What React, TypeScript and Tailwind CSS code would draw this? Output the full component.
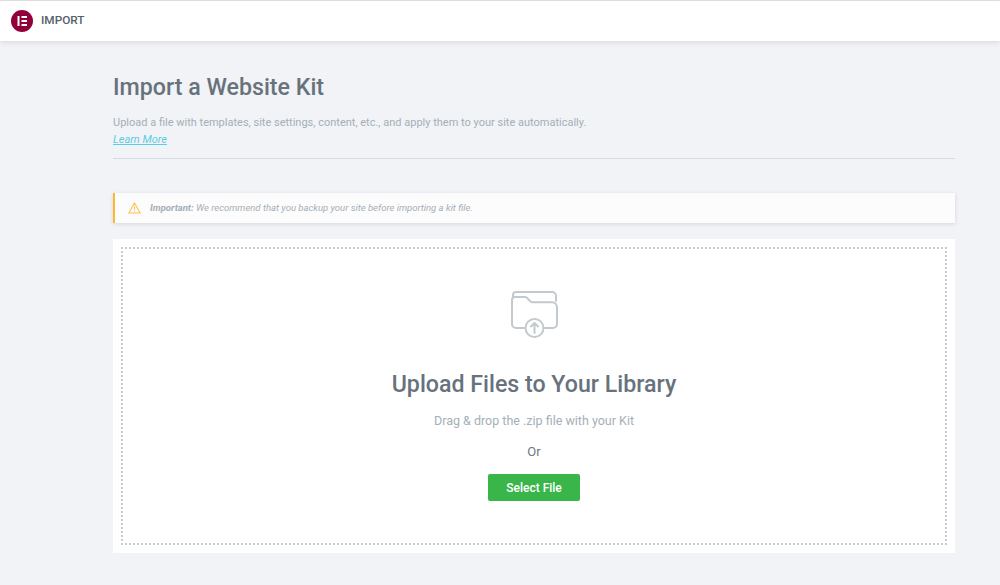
import React from 'react';

const Logo = () => (
  <svg width="22" height="22" viewBox="0 0 22 22" className="shrink-0">
    <circle cx="11" cy="11" r="11" fill="#92003b" />
    <rect x="6.5" y="6" width="2" height="10" fill="#fff" />
    <rect x="10.5" y="6" width="5.5" height="2" fill="#fff" />
    <rect x="10.5" y="10" width="5.5" height="2" fill="#fff" />
    <rect x="10.5" y="14" width="5.5" height="2" fill="#fff" />
  </svg>
);

const WarningIcon = () => (
  <svg width="13" height="12" viewBox="0 0 13 12" fill="none" stroke="#fbc04f" strokeWidth="1.1" className="shrink-0">
    <path d="M6.5 1 L12.2 11 H0.8 Z" strokeLinejoin="round" />
    <path d="M6.5 4.2 V7.8 M6.5 8.8 V9.8" />
  </svg>
);

const FolderIcon = () => (
  <svg width="48" height="48" viewBox="0 0 48 48" fill="none" stroke="#c2c9cf" strokeWidth="2" strokeLinecap="round" strokeLinejoin="round">
    <path d="M3 7.5 V5 a3 3 0 0 1 3-3 H42 a4 4 0 0 1 4 4 V11" />
    <path d="M14 38 H6 a4 4 0 0 1-4-4 V10 a3 3 0 0 1 3-3 H15 a3 3 0 0 1 2.5 1.5 L20 11 a3 3 0 0 0 2.5 1.2 H42 a5 5 0 0 1 5 5 V34 a4 4 0 0 1-4 4 H35" />
    <circle cx="24.5" cy="38" r="9" />
    <path d="M24.5 43 V33.5 M21 36.5 L24.5 33 L28 36.5" />
  </svg>
);

export default function App() {
  return (
    <div className="min-h-[585px] bg-[#f1f3f7] font-['Roboto',sans-serif] border-t border-[#e6e6e6]">
      {/* Header */}
      <header className="h-10 bg-white shadow-[0_1px_6px_rgba(0,0,0,0.12)] flex items-center pl-[11px] gap-2">
        <Logo />
        <span className="text-[11.8px] font-medium text-[#556068]">IMPORT</span>
      </header>

      <main className="w-[842px] ml-[113px]">
        {/* Intro */}
        <h1 className="mt-[31px] text-[23.2px] leading-[30px] font-medium text-[#67727c]">Import a Website Kit</h1>
        <p className="mt-[13px] text-[11px] leading-4 text-[#a4afb7]">
          Upload a file with templates, site settings, content, etc., and apply them to your site automatically.
        </p>
        <a className="block mt-[1px] text-[11px] leading-4 italic underline text-[#5bcde3]">Learn More</a>
        <div className="mt-[10px] border-t border-[#d5dadf]" />

        {/* Notice */}
        <div className="mt-[34px] h-[30px] flex items-center gap-[9px] bg-[#fcfcfd] border-l-2 border-[#fcb92c] pl-[13px] shadow-[0_1px_4px_rgba(0,0,0,0.12)]">
          <WarningIcon />
          <p className="text-[9.5px] italic text-[#a4afb7]">
            <span className="font-bold">Important:</span> We recommend that you backup your site before importing a kit file.
          </p>
        </div>

        {/* Upload */}
        <div className="mt-4 h-[314px] bg-white p-2">
          <div className="h-full border-2 border-dotted border-[#c9cdd1] flex flex-col items-center pt-[41px]">
            <FolderIcon />
            <h2 className="mt-[31px] text-[23.2px] leading-[30px] font-medium text-[#67727c]">Upload Files to Your Library</h2>
            <p className="mt-[12px] text-[12.5px] leading-5 text-[#a4afb7]">Drag &amp; drop the .zip file with your Kit</p>
            <p className="mt-[11px] text-[13px] leading-5 text-[#6d7882]">Or</p>
            <button className="mt-[12px] w-[92px] h-[27px] rounded-[2px] bg-[#39b54a] text-xs font-medium text-white">
              Select File
            </button>
          </div>
        </div>
      </main>
    </div>
  );
}
